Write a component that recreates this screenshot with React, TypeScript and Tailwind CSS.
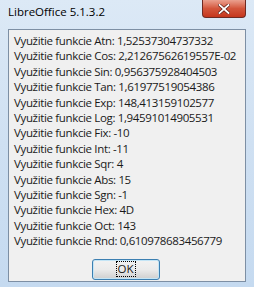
export default function App() {
  const lines = [
    'Využitie funkcie Atn: 1,52537304737332',
    'Využitie funkcie Cos: 2,21267562619557E-02',
    'Využitie funkcie Sin: 0,956375928404503',
    'Využitie funkcie Tan: 1,61977519054386',
    'Využitie funkcie Exp: 148,413159102577',
    'Využitie funkcie Log: 1,94591014905531',
    'Využitie funkcie Fix: -10',
    'Využitie funkcie Int: -11',
    'Využitie funkcie Sqr: 4',
    'Využitie funkcie Abs: 15',
    'Využitie funkcie Sgn: -1',
    'Využitie funkcie Hex: 4D',
    'Využitie funkcie Oct: 143',
    'Využitie funkcie Rnd: 0,610978683456779',
  ];

  return (
    <div className="w-[254px] h-[287px] overflow-hidden bg-gradient-to-b from-[#dce9f6] via-[#cfe0f2] to-[#c5daf0] font-['Open_Sans',sans-serif] text-[11.5px] tracking-[-0.35px] text-[#1a1a1a]">
      {/* title bar */}
      <div className="h-[29px] flex items-start">
        <div className="pl-[8px] pt-[4px] leading-[16px] text-[11.5px] tracking-[0px] text-black">LibreOffice 5.1.3.2</div>
        <div className="ml-auto mr-[8px] w-[44px] h-[18px] rounded-b-[4px] border border-t-0 border-[#6e2a22] bg-gradient-to-b from-[#eaa08e] via-[#d3553b] to-[#c5361c] flex items-center justify-center">
          <svg width="12" height="10" viewBox="0 0 12 10">
            <path d="M1.5 1 L10.5 9 M10.5 1 L1.5 9" stroke="#5a1a12" strokeWidth="3.2" strokeLinecap="square" />
            <path d="M1.5 1 L10.5 9 M10.5 1 L1.5 9" stroke="#ffffff" strokeWidth="1.8" strokeLinecap="square" />
          </svg>
        </div>
      </div>

      {/* client area */}
      <div className="mx-[8px] h-[253px] border border-[#7d8fa4] bg-[#f0f0f0] flex flex-col">
        <div className="pl-[5px] pt-[3px] flex flex-col">
          {lines.map((l) => (
            <div key={l} className="leading-[15.4px] whitespace-nowrap">{l}</div>
          ))}
        </div>
        <div className="flex justify-center pt-[10px] pr-[3px]">
          <div className="w-[68px] h-[21px] rounded-[3px] border border-[#3c7fb1] bg-gradient-to-b from-[#f2f2f2] via-[#ebebeb] to-[#cfcfcf] flex items-center justify-center shadow-[inset_0_0_0_1px_#c4e5f6]">
            <span className="border border-dotted border-black leading-[14px] px-[1px] tracking-[0px]">OK</span>
          </div>
        </div>
      </div>
    </div>
  );
}
